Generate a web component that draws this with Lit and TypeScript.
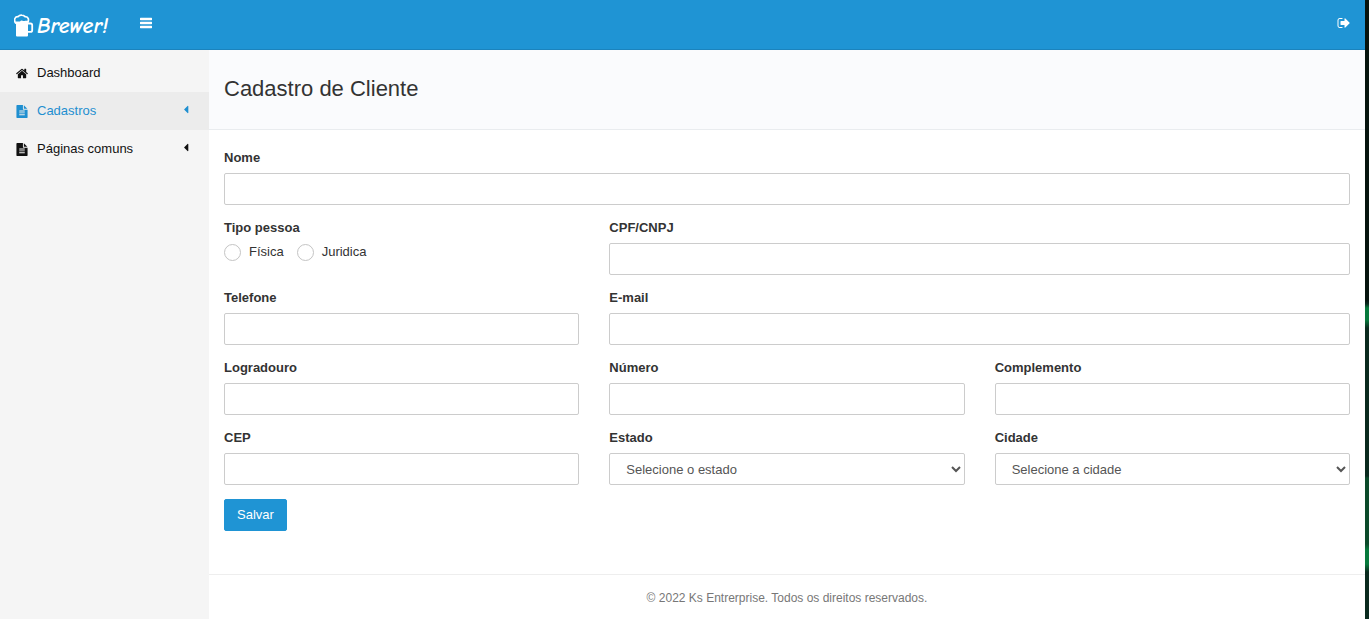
import { LitElement, html, css, svg } from "lit";
import { customElement } from "lit/decorators.js";
import { classMap } from "lit/directives/class-map.js";

const LINE = "v-64q0-14-9-23t-23-9h-704q-14 0-23 9t-9 23v64q0 14 9 23t23 9h704q14 0 23-9t9-23z";
const ICONS: Record<string, string> = {
  bars: "M1664 1310v180q0 26-19 45t-45 19h-1408q-26 0-45-19t-19-45v-180q0-26 19-45t45-19h1408q26 0 45 19t19 45zm0-512v180q0 26-19 45t-45 19h-1408q-26 0-45-19t-19-45v-180q0-26 19-45t45-19h1408q26 0 45 19t19 45zm0-512v180q0 26-19 45t-45 19h-1408q-26 0-45-19t-19-45v-180q0-26 19-45t45-19h1408q26 0 45 19t19 45z",
  signOut:
    "M704 1440q0 4 1 20t.5 26.5-3 23.5-10 19.5-20.5 6.5h-320q-119 0-203.5-84.5t-84.5-203.5v-704q0-119 84.5-203.5t203.5-84.5h320q13 0 22.5 9.5t9.5 22.5q0 4 1 20t.5 26.5-3 23.5-10 19.5-20.5 6.5h-320q-66 0-113 47t-47 113v704q0 66 47 113t113 47h312l11.5 1 11.5 3 8 5.5 7 9 2 13.5zm928-544q0 26-19 45l-544 544q-19 19-45 19t-45-19-19-45v-288h-448q-26 0-45-19t-19-45v-384q0-26 19-45t45-19h448v-288q0-26 19-45t45-19 45 19l544 544q19 19 19 45z",
  home: "M1472 992v480q0 26-19 45t-45 19h-384v-384h-256v384h-384q-26 0-45-19t-19-45v-480q0-1 .5-3t.5-3l575-474 575 474q1 2 1 6zm223-69l-62 74q-8 9-21 11h-3q-13 0-21-7l-692-577-692 577q-12 8-24 7-13-2-21-11l-62-74q-8-10-7-23.5t11-21.5l719-599q32-26 76-26t76 26l244 204v-195q0-14 9-23t23-9h192q14 0 23 9t9 23v408l219 182q10 8 11 21.5t-7 23.5z",
  file:
    "M1596 476q14 14 28 36h-472v-472q22 14 36 28zm-476 164h544v1056q0 40-28 68t-68 28h-1344q-40 0-68-28t-28-68v-1600q0-40 28-68t68-28h800v544q0 40 28 68t68 28zM1280 1376" +
    LINE + "M1280 1120" + LINE + "M1280 864" + LINE,
  caret: "M1216 448v896q0 26-19 45t-45 19-45-19l-448-448q-19-19-19-45t19-45l448-448q19-19 45-19t45 19 19 45z",
};

const icon = (name: string) => html`<svg class="icon" viewBox="0 0 1792 1792" aria-hidden="true">
  ${svg`<path d=${ICONS[name]} />`}
</svg>`;

interface MenuItem {
  label: string;
  icon: string;
  active?: boolean;
  nested?: boolean;
}

const MENU: MenuItem[] = [
  { label: "Dashboard", icon: "home" },
  { label: "Cadastros", icon: "file", active: true, nested: true },
  { label: "Páginas comuns", icon: "file", nested: true },
];

@customElement("app-root")
export class AppRoot extends LitElement {
  static styles = css`
    :host {
      display: flex;
      min-height: 100vh;
      background: #fff;
      color: #333;
      font: 13px/18px "Liberation Sans", Arial, sans-serif;
    }
    * {
      box-sizing: border-box;
    }
    .page {
      flex: 1;
      min-width: 0;
      display: flex;
      flex-direction: column;
    }
    .edge {
      width: 4px;
      background: linear-gradient(
        #06140e 0 300px, #0a2a1e 304px, #067a3c 308px 320px, #0a2a1e 328px 476px,
        #0b4a2a 478px 544px, #067a3c 550px 564px, #0a2a1e 572px
      );
    }
    .icon {
      width: 14px;
      height: 14px;
      fill: currentColor;
      display: block;
      flex: none;
    }
    .topbar {
      height: 50px;
      display: flex;
      align-items: center;
      padding: 0 14px;
      background: #1f94d4;
      border-bottom: 1px solid #1b83bd;
      color: #fff;
    }
    .brand {
      width: 118px;
      display: flex;
      align-items: center;
      gap: 3px;
      padding-top: 3px;
      color: #fff;
      text-decoration: none;
      font: italic 700 22px/24px "Comic Neue", Lato, cursive;
    }
    .mug {
      width: 20px;
      height: 24px;
      flex: none;
    }
    .tool {
      display: flex;
      padding: 7px;
      border: 0;
      background: none;
      color: inherit;
      cursor: pointer;
      margin-bottom: 3px;
    }
    .exit {
      display: flex;
      margin-left: auto;
      color: inherit;
      padding-bottom: 3px;
    }
    .body {
      flex: 1;
      display: flex;
    }
    .sidebar {
      width: 209px;
      flex: none;
      padding-top: 4px;
      background: #f5f5f5;
    }
    .menu {
      list-style: none;
      margin: 0;
      padding: 0;
    }
    .item {
      display: flex;
      align-items: center;
      gap: 8px;
      height: 38px;
      padding: 0 16px 0 15px;
      color: #111;
      text-decoration: none;
    }
    .item .icon {
      width: 14px;
      height: 13px;
    }
    .item.active {
      background: #ececec;
      color: #1f8fd0;
    }
    .item .chevron {
      margin-left: auto;
      padding-bottom: 4px;
    }
    .main {
      flex: 1;
      min-width: 0;
      display: flex;
      flex-direction: column;
    }
    .heading {
      padding: 24px 15px 25px;
      background: #fafbfd;
      border-bottom: 1px solid #e9ecef;
    }
    .title {
      margin: 0;
      font-size: 22px;
      line-height: 30px;
      font-weight: 400;
    }
    .form {
      flex: 1;
      display: grid;
      grid-template-columns: repeat(3, minmax(0, 1fr));
      align-content: start;
      gap: 14px 30px;
      padding: 19px 15px;
    }
    .field {
      display: flex;
      flex-direction: column;
      gap: 6px;
      margin: 0;
      padding: 0;
      border: 0;
      min-width: 0;
    }
    .span2 {
      grid-column: span 2;
    }
    .span3 {
      grid-column: span 3;
    }
    .label {
      padding: 0;
      font-weight: 700;
    }
    .control {
      width: 100%;
      height: 32px;
      margin: 0;
      padding: 4px 12px;
      border: 1px solid #ccc;
      border-radius: 2px;
      background: #fff;
      color: #555;
      font: inherit;
    }
    .choices {
      display: flex;
      gap: 13px;
      padding-top: 6px;
    }
    .choice {
      display: flex;
      align-items: center;
      gap: 8px;
    }
    .radio {
      appearance: none;
      width: 17px;
      height: 17px;
      margin: 0;
      border: 1px solid #c4c4c4;
      border-radius: 50%;
      background: #fff;
    }
    .radio:checked {
      border: 5px solid #1f94d4;
    }
    .save {
      justify-self: start;
      height: 32px;
      padding: 0 12px;
      border: 1px solid #1f94d4;
      border-radius: 2px;
      background: #1f94d4;
      color: #fff;
      font: inherit;
      cursor: pointer;
    }
    .footer {
      padding: 14px 15px 12px;
      border-top: 1px solid #eee;
      color: #777;
      font-size: 12px;
      text-align: center;
    }
  `;

  private input(id: string, label: string, span = "") {
    return html`<div class="field ${span}">
      <label class="label" for=${id}>${label}</label>
      <input class="control" id=${id} type="text" />
    </div>`;
  }

  private select(id: string, label: string, placeholder: string) {
    return html`<div class="field">
      <label class="label" for=${id}>${label}</label>
      <select class="control" id=${id}><option>${placeholder}</option></select>
    </div>`;
  }

  render() {
    return html`
      <div class="page">
        <header class="topbar">
          <a class="brand" href="#">
            <svg class="mug" viewBox="0 0 20 24" aria-hidden="true">
              <path fill="#fff" d="M2 7.5h4q1-1.3 2.5-.8 1.3.8 2.8 0h2.7v14.8q0 1-1 1h-10q-1 0-1-1z" />
              <path fill="none" stroke="#fff" stroke-width="1.7" stroke-linecap="round" stroke-linejoin="round"
                d="M1.600 9Q0 6.500.9 4.500 1.800 2.600 4 2.700 5.500 1 7.800 1.200q2 .1 3 1.400 2.700-.2 3.500 2 .5 2-.5 4" />
              <path fill="none" stroke="#fff" stroke-width="1.8" d="M14 9.5h2.5q1.7 0 1.7 1.7v5q0 1.7-1.7 1.7h-2.5" />
            </svg>
            <span>Brewer!</span>
          </a>
          <button class="tool" type="button" aria-label="Menu">${icon("bars")}</button>
          <a class="exit" href="#" aria-label="Sair">${icon("signOut")}</a>
        </header>
        <div class="body">
          <nav class="sidebar">
            <ul class="menu">
              ${MENU.map(
                (m) => html`<li>
                  <a class=${classMap({ item: true, active: !!m.active })} href="#">
                    ${icon(m.icon)}<span>${m.label}</span>
                    ${m.nested ? html`<span class="chevron">${icon("caret")}</span>` : ""}
                  </a>
                </li>`
              )}
            </ul>
          </nav>
          <main class="main">
            <div class="heading"><h1 class="title">Cadastro de Cliente</h1></div>
            <form class="form">
              ${this.input("nome", "Nome", "span3")}
              <fieldset class="field">
                <legend class="label">Tipo pessoa</legend>
                <div class="choices">
                  <label class="choice"><input class="radio" type="radio" name="tipo" />Física</label>
                  <label class="choice"><input class="radio" type="radio" name="tipo" />Juridica</label>
                </div>
              </fieldset>
              ${this.input("documento", "CPF/CNPJ", "span2")}
              ${this.input("telefone", "Telefone")}
              ${this.input("email", "E-mail", "span2")}
              ${this.input("logradouro", "Logradouro")}
              ${this.input("numero", "Número")}
              ${this.input("complemento", "Complemento")}
              ${this.input("cep", "CEP")}
              ${this.select("estado", "Estado", "Selecione o estado")}
              ${this.select("cidade", "Cidade", "Selecione a cidade")}
              <button class="save" type="button">Salvar</button>
            </form>
            <footer class="footer">© 2022 Ks Entrerprise. Todos os direitos reservados.</footer>
          </main>
        </div>
      </div>
      <div class="edge"></div>
    `;
  }
}
